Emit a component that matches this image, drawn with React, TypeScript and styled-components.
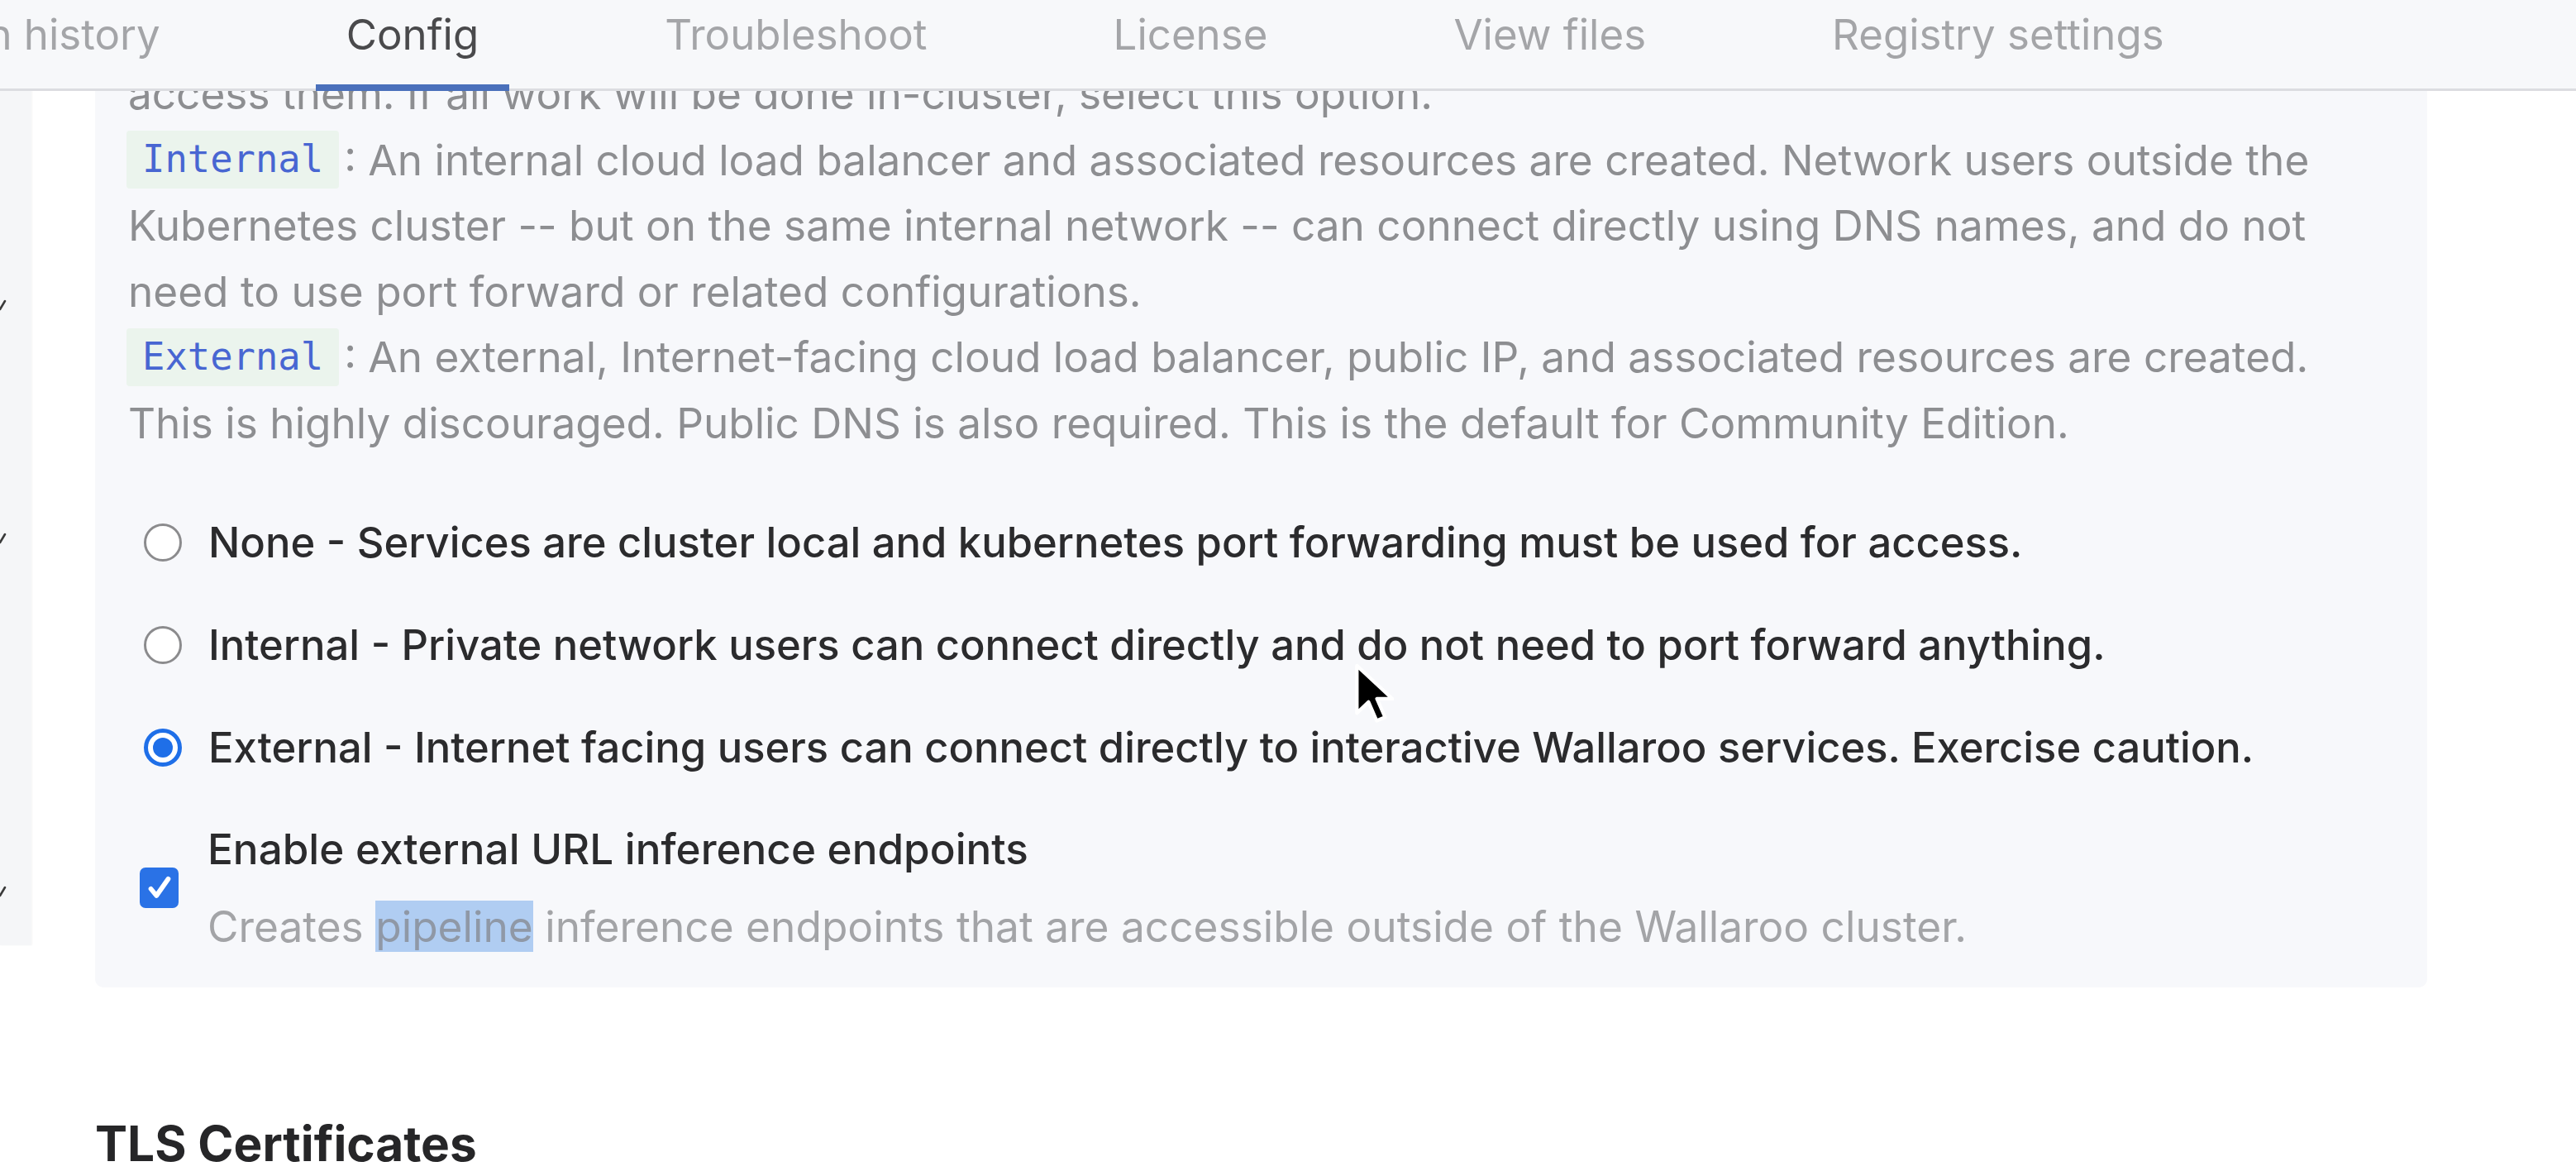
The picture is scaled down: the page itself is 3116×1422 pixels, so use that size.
import React from "react";
import styled, { createGlobalStyle } from "styled-components";

const GlobalStyle = createGlobalStyle`
  html, body {
    margin: 0;
    padding: 0;
    background: #ffffff;
    font-family: Inter, "Noto Sans", "Liberation Sans", sans-serif;
  }
`;

const Page = styled.div`
  position: relative;
  width: 3116px;
  height: 1422px;
  overflow: hidden;
  display: flex;
  flex-direction: column;
`;

const Header = styled.div`
  flex: none;
  height: 110px;
  box-sizing: border-box;
  background: #f7f8fa;
  box-shadow: inset 0 -3px 0 #dcdde1;
  display: flex;
  overflow: hidden;
`;

const TabList = styled.div`
  display: flex;
  gap: 151px;
  margin-left: -204px;
`;

const Tab = styled.div<{ $active?: boolean }>`
  height: 110px;
  box-sizing: border-box;
  padding: 12px 37px 0;
  font-size: 51px;
  line-height: 60px;
  white-space: nowrap;
  color: ${(p) => (p.$active ? "#4a4a4c" : "#a4a5a8")};
  border-bottom: 8px solid ${(p) => (p.$active ? "#4a70bb" : "transparent")};
`;

const Body = styled.div`
  flex: 1;
  display: flex;
  align-items: flex-start;
  overflow: hidden;
`;

const Sidebar = styled.div`
  flex: none;
  width: 38px;
  height: 1033px;
  background: #f5f6f8;
  box-shadow: 1px 0 2px rgba(0, 0, 0, 0.04);
  display: flex;
  flex-direction: column;
  overflow: hidden;
`;

const SideMark = styled.svg<{ $top: number }>`
  flex: none;
  display: block;
  margin-top: ${(p) => p.$top}px;
  width: 8px;
  height: 18px;
`;

const Main = styled.div`
  flex: none;
  width: 2821px;
  margin-left: 77px;
  display: flex;
  flex-direction: column;
`;

const Card = styled.div`
  background: #f7f8fb;
  border-radius: 0 0 10px 10px;
  padding: 0 40px 33px;
  display: flex;
  flex-direction: column;
`;

const Paragraph = styled.div`
  margin-top: -36px;
  font-size: 51.3px;
  line-height: 79.5px;
  color: #8d8e91;
`;

const Line = styled.div`
  display: flex;
  align-items: center;
  height: 79.5px;
  white-space: nowrap;
`;

const Code = styled.code`
  flex: none;
  height: 70px;
  line-height: 70px;
  padding: 0 19px;
  margin: 0 6px 0 -2px;
  background: #ebf4ed;
  border-radius: 4px;
  color: #4866d2;
  font-family: "DejaVu Sans Mono", "Liberation Mono", monospace;
  font-size: 45.5px;
`;

const OptionGroup = styled.div`
  margin-top: 65px;
  display: flex;
  flex-direction: column;
  gap: 44.5px;
`;

const OptionRow = styled.label`
  display: flex;
  align-items: center;
  height: 79.5px;
  padding-left: 19px;
  gap: 32px;
`;

const RadioDot = styled.span<{ $checked?: boolean }>`
  flex: none;
  width: 46px;
  height: 46px;
  box-sizing: border-box;
  border-radius: 50%;
  background: #ffffff;
  border: ${(p) => (p.$checked ? "5px solid #1f6fe8" : "3px solid #8b8b8d")};
  display: flex;
  align-items: center;
  justify-content: center;

  &::after {
    content: "";
    display: ${(p) => (p.$checked ? "block" : "none")};
    width: 24px;
    height: 24px;
    border-radius: 50%;
    background: #1f6fe8;
  }
`;

const OptionLabel = styled.span`
  font-size: 50.7px;
  line-height: 79.5px;
  font-weight: 500;
  color: #2b2b2d;
  white-space: nowrap;
`;

const CheckRow = styled.label`
  margin-top: 43.5px;
  display: flex;
  align-items: center;
  padding-left: 14px;
  gap: 35px;
`;

const CheckBox = styled.span`
  flex: none;
  width: 47px;
  height: 49px;
  border-radius: 7px;
  background: #2a72e6;
  display: flex;
  align-items: center;
  justify-content: center;
`;

const CheckText = styled.div`
  display: flex;
  flex-direction: column;
  gap: 14.5px;
`;

const CheckLabel = styled.span`
  font-size: 51.2px;
  line-height: 79.5px;
  font-weight: 500;
  color: #2b2b2d;
  white-space: nowrap;
`;

const CheckHelp = styled.span`
  font-size: 51.4px;
  line-height: 79.5px;
  color: #a3a4a7;
  white-space: nowrap;
`;

const Selected = styled.span`
  background: #b0cdf2;
  color: #8f98a6;
`;

const SectionTitle = styled.h3`
  margin: 147px 0 0;
  font-size: 58.5px;
  line-height: 84px;
  font-weight: 700;
  color: #262628;
`;

const Cursor = styled.svg`
  position: absolute;
  left: 1636px;
  top: 800px;
  width: 50px;
  height: 82px;
  pointer-events: none;
`;

const tabs = ["Version history", "Config", "Troubleshoot", "License", "View files", "Registry settings"];

const options = [
  { label: "None - Services are cluster local and kubernetes port forwarding must be used for access.", checked: false },
  { label: "Internal - Private network users can connect directly and do not need to port forward anything.", checked: false },
  { label: "External - Internet facing users can connect directly to interactive Wallaroo services. Exercise caution.", checked: true },
];

const Tick = ({ top }: { top: number }) => (
  <SideMark $top={top} viewBox="0 0 8 18">
    <path d="M0 16 L6 6" stroke="#3a3a3a" strokeWidth="2.6" strokeLinecap="round" />
  </SideMark>
);

export default function App() {
  return (
    <Page>
      <GlobalStyle />
      <Header>
        <TabList>
          {tabs.map((t) => (
            <Tab key={t} $active={t === "Config"}>{t}</Tab>
          ))}
        </TabList>
      </Header>
      <Body>
        <Sidebar>
          <Tick top={248} />
          <Tick top={264} />
          <Tick top={409} />
        </Sidebar>
        <Main>
          <Card>
            <Paragraph>
              <Line>access them. If all work will be done in-cluster, select this option.</Line>
              <Line>
                <Code>Internal</Code>
                <span>: An internal cloud load balancer and associated resources are created. Network users outside the</span>
              </Line>
              <Line>Kubernetes cluster -- but on the same internal network -- can connect directly using DNS names, and do not</Line>
              <Line>need to use port forward or related configurations.</Line>
              <Line>
                <Code>External</Code>
                <span>: An external, Internet-facing cloud load balancer, public IP, and associated resources are created.</span>
              </Line>
              <Line>This is highly discouraged. Public DNS is also required. This is the default for Community Edition.</Line>
            </Paragraph>
            <OptionGroup>
              {options.map((o) => (
                <OptionRow key={o.label}>
                  <RadioDot $checked={o.checked} />
                  <OptionLabel>{o.label}</OptionLabel>
                </OptionRow>
              ))}
            </OptionGroup>
            <CheckRow>
              <CheckBox>
                <svg width="36" height="36" viewBox="0 0 24 24" fill="none" stroke="#ffffff" strokeWidth="3.8" strokeLinecap="round" strokeLinejoin="round">
                  <path d="M5 12.5l4.5 5.5L19 4.5" />
                </svg>
              </CheckBox>
              <CheckText>
                <CheckLabel>Enable external URL inference endpoints</CheckLabel>
                <CheckHelp>
                  Creates <Selected>pipeline</Selected> inference endpoints that are accessible outside of the Wallaroo cluster.
                </CheckHelp>
              </CheckText>
            </CheckRow>
          </Card>
          <SectionTitle>TLS Certificates</SectionTitle>
        </Main>
      </Body>
      <Cursor viewBox="0 0 15 25">
        <path d="M1.5 1.5 L1.5 19 L5.8 14.9 L8.8 21.8 L11.9 20.5 L8.9 13.7 L14.6 13.7 Z" fill="#000000" stroke="#ffffff" strokeWidth="1.3" strokeLinejoin="round" />
      </Cursor>
    </Page>
  );
}
